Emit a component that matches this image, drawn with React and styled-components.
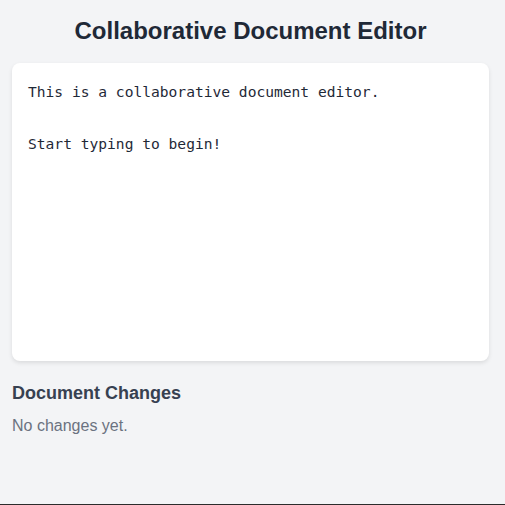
import React, { useState } from "react";
import styled, { createGlobalStyle } from "styled-components";

const GlobalStyle = createGlobalStyle`
  html { background: #2b2b2b; }
  body { margin: 0; font-family: "Liberation Sans", Arial, sans-serif; }
  * { box-sizing: border-box; }
`;

const Page = styled.div`
  min-height: calc(100vh - 1px);
  background: #f3f4f6;
  padding: 16px 16px 16px 12px;
  display: flex;
  flex-direction: column;
`;

const Title = styled.h1`
  margin: 0 0 17px;
  font-size: 24px;
  line-height: 30px;
  font-weight: 700;
  color: #1f2937;
  text-align: center;
`;

const Editor = styled.textarea`
  display: block;
  width: 100%;
  height: 298px;
  padding: 16px;
  border: none;
  border-radius: 8px;
  background: #ffffff;
  box-shadow: 0 2px 4px rgba(0, 0, 0, 0.1);
  font-family: "DejaVu Sans Mono", "Liberation Mono", monospace;
  font-size: 14.6px;
  line-height: 26px;
  color: #1f2937;
  resize: none;
  outline: none;
`;

const Section = styled.section`
  margin-top: 22px;
`;

const SectionTitle = styled.h2`
  margin: 0 0 13px;
  font-size: 18px;
  line-height: 21px;
  font-weight: 700;
  color: #374151;
`;

const Empty = styled.p`
  margin: 0;
  font-size: 16px;
  line-height: 18px;
  color: #6b7280;
`;

export default function App() {
  const [text, setText] = useState(
    "This is a collaborative document editor.\n\nStart typing to begin!"
  );
  return (
    <>
      <GlobalStyle />
      <Page>
        <Title>Collaborative Document Editor</Title>
        <Editor value={text} onChange={(e) => setText(e.target.value)} spellCheck={false} />
        <Section>
          <SectionTitle>Document Changes</SectionTitle>
          <Empty>No changes yet.</Empty>
        </Section>
      </Page>
    </>
  );
}
